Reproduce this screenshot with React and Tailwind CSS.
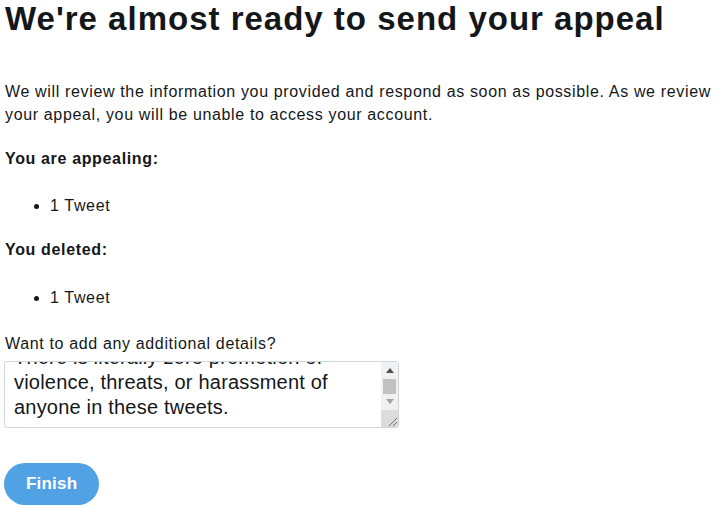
import { useEffect, useRef } from 'react';

export default function App() {
  const areaRef = useRef(null);

  // the textarea in the shot is scrolled down to its last lines
  useEffect(() => {
    if (areaRef.current) areaRef.current.scrollTop = areaRef.current.scrollHeight;
  }, []);

  return (
    <div className="min-h-screen bg-white pl-[5px] text-[#14171a] font-['Liberation_Sans',Arial,sans-serif]">
      <h1 className="text-[33px] font-bold leading-[37px] tracking-[1px]">We're almost ready to send your appeal</h1>

      <div className="text-base leading-[23px] tracking-[0.65px]">
        <p className="mt-[43px]">
          We will review the information you provided and respond as soon as possible. As we review your appeal, you will be unable to access your account.
        </p>

        <p className="mt-[21px] font-bold">You are appealing:</p>
        <ul className="mt-[24px] list-disc pl-[45px]">
          <li>1 Tweet</li>
        </ul>

        <p className="mt-[21px] font-bold">You deleted:</p>
        <ul className="mt-[25px] list-disc pl-[45px]">
          <li>1 Tweet</li>
        </ul>

        <p className="mt-[23px]">Want to add any additional details?</p>
      </div>

      <div className="relative -ml-px mt-[6px] h-[67px] w-[395px]">
        <textarea
          ref={areaRef}
          className="block h-full w-full resize-none overflow-hidden rounded-[3px] border border-[#ccd6dd] pt-[8px] pb-[7px] pl-[9px] pr-[22px] text-[20px] leading-[25px] tracking-[0.2px] text-[#14171a] outline-none"
          defaultValue="There is literally zero promotion of violence, threats, or harassment of anyone in these tweets."
        />
        {/* classic scrollbar + resize grip drawn over the field */}
        <div className="absolute right-px top-px bottom-px flex w-[17px] flex-col bg-[#f1f1f1]">
          <div className="flex h-[17px] items-center justify-center">
            <svg width="8" height="5" viewBox="0 0 8 5"><path d="M0 5 L4 0 L8 5 Z" fill="#505050" /></svg>
          </div>
          <div className="mx-[2px] h-[15px] bg-[#c1c1c1]" />
          <div className="flex h-[17px] items-center justify-center">
            <svg width="8" height="5" viewBox="0 0 8 5"><path d="M0 0 L4 5 L8 0 Z" fill="#a3a3a3" /></svg>
          </div>
          <div className="relative mt-auto h-[17px] bg-[#dcdcdc]">
            <svg className="absolute right-px bottom-px" width="9" height="9" viewBox="0 0 9 9">
              <path d="M1 9 L9 1 M5 9 L9 5" stroke="#6b6b6b" strokeWidth="1" />
            </svg>
          </div>
        </div>
      </div>

      <button className="-ml-px mt-[35px] h-[42px] rounded-full bg-[#50a2e5] px-[22px] text-[17px] font-bold tracking-[0.2px] text-white">
        Finish
      </button>
    </div>
  );
}
